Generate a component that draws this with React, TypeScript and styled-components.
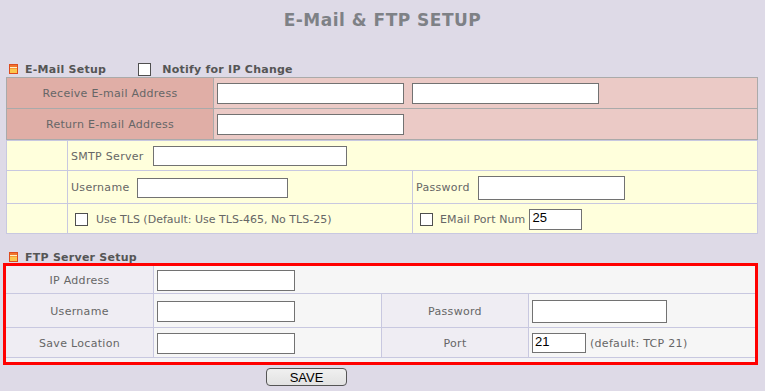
import { FC } from "react";
import styled, { createGlobalStyle } from "styled-components";

const GlobalStyle = createGlobalStyle`
  html, body {
    margin: 0;
    padding: 0;
    background: #dedae7;
  }
  body {
    font-family: "DejaVu Sans", Verdana, sans-serif;
    font-size: 11px;
    letter-spacing: 0.3px;
    color: #666;
  }
`;

const Page = styled.div`
  width: 765px;
  height: 391px;
  padding-left: 6px;
  box-sizing: border-box;
  overflow: hidden;
`;

const Title = styled.h1`
  margin: 0;
  padding-top: 10px;
  height: 60px;
  box-sizing: border-box;
  text-align: center;
  font-size: 17px;
  line-height: 20px;
  font-weight: bold;
  letter-spacing: 0.5px;
  color: #7e8186;
  padding-right: 6px;
`;

const SectionHead = styled.div<{ $h: number; $mt?: number }>`
  display: flex;
  align-items: center;
  height: ${(p) => p.$h}px;
  margin-top: ${(p) => p.$mt ?? 0}px;
  padding-left: 3px;
  padding-top: 1px;
  box-sizing: border-box;
  font-weight: bold;
  letter-spacing: 0.25px;
  color: #555;
  font-size: 11px;
`;

const HeadText = styled.span`
  margin-left: 7px;
`;

const Notify = styled.label`
  display: flex;
  align-items: center;
  gap: 11px;
  margin-left: 32px;
`;

const Check = styled.input.attrs({ type: "checkbox" })`
  appearance: none;
  width: 13px;
  height: 13px;
  margin: 0;
  border: 1px solid #4f4f4f;
  background: #fff;
  box-sizing: border-box;
`;

const Sheet = styled.div<{ $cols: string; $rows: string; $line: string }>`
  display: grid;
  grid-template-columns: ${(p) => p.$cols};
  grid-template-rows: ${(p) => p.$rows};
  gap: 1px;
  background: ${(p) => p.$line};
  border: 1px solid ${(p) => p.$line};
  width: max-content;
`;

const Cell = styled.div<{ $bg: string; $center?: boolean; $span?: number; $pad?: number }>`
  display: flex;
  align-items: center;
  justify-content: ${(p) => (p.$center ? "center" : "flex-start")};
  background: ${(p) => p.$bg};
  grid-column: ${(p) => (p.$span ? `span ${p.$span}` : "auto")};
  padding-left: ${(p) => p.$pad ?? 0}px;
  padding-top: 1px;
  white-space: nowrap;
`;

const Field = styled.input.attrs({ type: "text" })<{ $w: number; $h?: number; $ml?: number }>`
  width: ${(p) => p.$w}px;
  height: ${(p) => p.$h ?? 21}px;
  margin: 0 0 0 ${(p) => p.$ml ?? 0}px;
  box-sizing: border-box;
  border: 1px solid #727272;
  background: #fff;
  padding: 0 2px 3px;
  font-family: "Liberation Sans", Arial, sans-serif;
  font-size: 13px;
  letter-spacing: 0;
  color: #000;
  outline: none;
`;

const Hint = styled.span<{ $ml: number; $ls?: number }>`
  margin-left: ${(p) => p.$ml}px;
  letter-spacing: ${(p) => p.$ls ?? 0.3}px;
`;

const RedBox = styled.div`
  margin-left: -3px;
  width: max-content;
  border: 3px solid #ff0000;
  background: #f3f3f5;
  padding-bottom: 4px;
`;

const FtpSheet = styled(Sheet)`
  border: none;
  border-bottom: 1px solid #c8c8e0;
`;

const SaveButton = styled.button`
  display: block;
  margin: 3px 0 0 260px;
  width: 81px;
  height: 18px;
  padding: 0;
  border: 1px solid #555;
  border-radius: 4px;
  background: linear-gradient(#f0f0f0, #e2e2e2);
  font-family: "Liberation Sans", Arial, sans-serif;
  font-size: 13px;
  line-height: 15px;
  color: #000;
`;

const FolderIcon: FC = () => (
  <svg width="9" height="10" viewBox="0 0 9 10">
    <rect x="0.5" y="0.5" width="8" height="9" fill="#fbc64c" stroke="#dc4c1e" />
    <rect x="1" y="1" width="7" height="2" fill="#f0742c" />
    <rect x="1" y="3" width="7" height="1" fill="#fff2c8" />
    <rect x="1" y="4" width="7" height="1" fill="#f59a3a" />
  </svg>
);

const PINK_LABEL = "#e0aea6";
const PINK_VALUE = "#ebcac6";
const YELLOW = "#ffffdc";
const LAV_LINE = "#c8c8e0";
const FTP_LABEL = "#efedf3";
const FTP_VALUE = "#f6f6f6";

const App: FC = () => {
  return (
    <Page>
      <GlobalStyle />
      <Title>E-Mail &amp; FTP SETUP</Title>

      <SectionHead $h={17}>
        <FolderIcon />
        <HeadText>E-Mail Setup</HeadText>
        <Notify>
          <Check />
          <span>Notify for IP Change</span>
        </Notify>
      </SectionHead>

      <Sheet $cols="206px 543px" $rows="30px 30px" $line="#aaaaaa">
        <Cell $bg={PINK_LABEL} $center>Receive E-mail Address</Cell>
        <Cell $bg={PINK_VALUE} $pad={3}>
          <Field $w={187} />
          <Field $w={187} $ml={8} />
        </Cell>
        <Cell $bg={PINK_LABEL} $center>Return E-mail Address</Cell>
        <Cell $bg={PINK_VALUE} $pad={3}>
          <Field $w={187} />
        </Cell>
      </Sheet>

      <Sheet $cols="60px 344px 344px" $rows="29px 32px 29px" $line={LAV_LINE}>
        <Cell $bg={YELLOW} />
        <Cell $bg={YELLOW} $span={2} $pad={3}>
          SMTP Server
          <Field $w={194} $h={20} $ml={9} />
        </Cell>
        <Cell $bg={YELLOW} />
        <Cell $bg={YELLOW} $pad={3}>
          Username
          <Field $w={151} $h={20} $ml={8} />
        </Cell>
        <Cell $bg={YELLOW} $pad={3}>
          Password
          <Field $w={147} $h={24} $ml={8} />
        </Cell>
        <Cell $bg={YELLOW} />
        <Cell $bg={YELLOW} $pad={7}>
          <Check />
          <Hint $ml={8} $ls={0}>Use TLS (Default: Use TLS-465, No TLS-25)</Hint>
        </Cell>
        <Cell $bg={YELLOW} $pad={7}>
          <Check />
          <Hint $ml={7} $ls={0.1}>EMail Port Num</Hint>
          <Field $w={53} $ml={4} defaultValue="25" />
        </Cell>
      </Sheet>

      <SectionHead $h={13} $mt={16}>
        <FolderIcon />
        <HeadText>FTP Server Setup</HeadText>
      </SectionHead>

      <RedBox>
        <FtpSheet $cols="147px 227px 146px 226px" $rows="27px 33px 29px" $line={LAV_LINE}>
          <Cell $bg={FTP_LABEL} $center>IP Address</Cell>
          <Cell $bg={FTP_VALUE} $span={3} $pad={3}>
            <Field $w={138} />
          </Cell>
          <Cell $bg={FTP_LABEL} $center>Username</Cell>
          <Cell $bg={FTP_VALUE} $pad={3}>
            <Field $w={138} />
          </Cell>
          <Cell $bg={FTP_LABEL} $center>Password</Cell>
          <Cell $bg={FTP_VALUE} $pad={3}>
            <Field $w={135} $h={23} />
          </Cell>
          <Cell $bg={FTP_LABEL} $center>Save Location</Cell>
          <Cell $bg={FTP_VALUE} $pad={3}>
            <Field $w={138} />
          </Cell>
          <Cell $bg={FTP_LABEL} $center>Port</Cell>
          <Cell $bg={FTP_VALUE} $pad={3}>
            <Field $w={54} $h={20} defaultValue="21" />
            <Hint $ml={4}>(default: TCP 21)</Hint>
          </Cell>
        </FtpSheet>
      </RedBox>

      <SaveButton>SAVE</SaveButton>
    </Page>
  );
};

export default App;
